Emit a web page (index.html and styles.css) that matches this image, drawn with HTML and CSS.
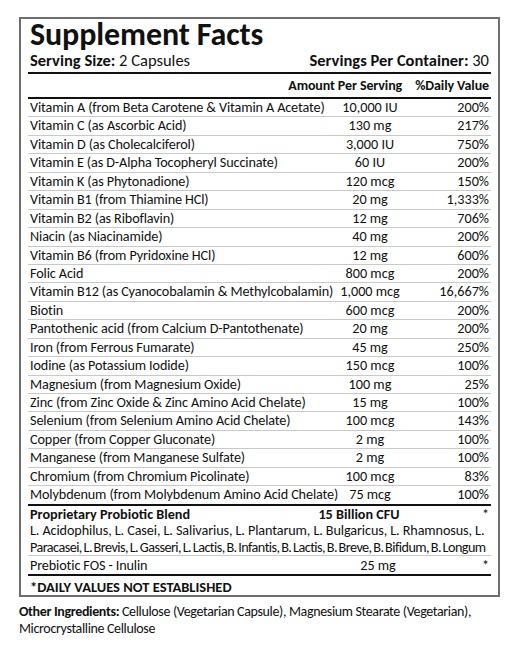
FILE: index.html
```html
<!DOCTYPE html>
<html>
<head>
<meta charset="utf-8">
<link rel="stylesheet" href="styles.css">
</head>
<body>
<div class="label">
  <h1 class="title">Supplement Facts</h1>
  <div class="serving">
    <span><b>Serving Size:</b> 2 Capsules</span>
    <span><b>Servings Per Container:</b> 30</span>
  </div>
  <div class="colhead">
    <span class="h-amt">Amount Per Serving</span>
    <span class="h-dv">%Daily Value</span>
  </div>
  <div class="rows">
    <div class="row"><span class="name">Vitamin A (from Beta Carotene &amp; Vitamin A Acetate)</span><span class="amt">10,000 IU</span><span class="dv">200%</span></div>
    <div class="row"><span class="name">Vitamin C (as Ascorbic Acid)</span><span class="amt">130 mg</span><span class="dv">217%</span></div>
    <div class="row"><span class="name">Vitamin D (as Cholecalciferol)</span><span class="amt">3,000 IU</span><span class="dv">750%</span></div>
    <div class="row"><span class="name">Vitamin E (as D-Alpha Tocopheryl Succinate)</span><span class="amt">60 IU</span><span class="dv">200%</span></div>
    <div class="row"><span class="name">Vitamin K (as Phytonadione)</span><span class="amt">120 mcg</span><span class="dv">150%</span></div>
    <div class="row"><span class="name">Vitamin B1 (from Thiamine HCl)</span><span class="amt">20 mg</span><span class="dv">1,333%</span></div>
    <div class="row"><span class="name">Vitamin B2 (as Riboflavin)</span><span class="amt">12 mg</span><span class="dv">706%</span></div>
    <div class="row"><span class="name">Niacin (as Niacinamide)</span><span class="amt">40 mg</span><span class="dv">200%</span></div>
    <div class="row"><span class="name">Vitamin B6 (from Pyridoxine HCl)</span><span class="amt">12 mg</span><span class="dv">600%</span></div>
    <div class="row"><span class="name">Folic Acid</span><span class="amt">800 mcg</span><span class="dv">200%</span></div>
    <div class="row"><span class="name">Vitamin B12 (as Cyanocobalamin &amp; Methylcobalamin)</span><span class="amt">1,000 mcg</span><span class="dv">16,667%</span></div>
    <div class="row"><span class="name">Biotin</span><span class="amt">600 mcg</span><span class="dv">200%</span></div>
    <div class="row"><span class="name">Pantothenic acid (from Calcium D-Pantothenate)</span><span class="amt">20 mg</span><span class="dv">200%</span></div>
    <div class="row"><span class="name">Iron (from Ferrous Fumarate)</span><span class="amt">45 mg</span><span class="dv">250%</span></div>
    <div class="row"><span class="name">Iodine (as Potassium Iodide)</span><span class="amt">150 mcg</span><span class="dv">100%</span></div>
    <div class="row"><span class="name">Magnesium (from Magnesium Oxide)</span><span class="amt">100 mg</span><span class="dv">25%</span></div>
    <div class="row"><span class="name">Zinc (from Zinc Oxide &amp; Zinc Amino Acid Chelate)</span><span class="amt">15 mg</span><span class="dv">100%</span></div>
    <div class="row"><span class="name">Selenium (from Selenium Amino Acid Chelate)</span><span class="amt">100 mcg</span><span class="dv">143%</span></div>
    <div class="row"><span class="name">Copper (from Copper Gluconate)</span><span class="amt">2 mg</span><span class="dv">100%</span></div>
    <div class="row"><span class="name">Manganese (from Manganese Sulfate)</span><span class="amt">2 mg</span><span class="dv">100%</span></div>
    <div class="row"><span class="name">Chromium (from Chromium Picolinate)</span><span class="amt">100 mcg</span><span class="dv">83%</span></div>
    <div class="row row-last"><span class="name">Molybdenum (from Molybdenum Amino Acid Chelate)</span><span class="amt">75 mcg</span><span class="dv">100%</span></div>
  </div>
  <div class="blend">
    <div class="blend-head"><span class="name"><b>Proprietary Probiotic Blend</b></span><span class="blend-amt"><b>15 Billion CFU</b></span><span class="dv">*</span></div>
    <div class="species">L. Acidophilus, L. Casei, L. Salivarius, L. Plantarum, L. Bulgaricus, L. Rhamnosus, L.</div>
    <div class="species tight">Paracasei, L. Brevis, L. Gasseri, L. Lactis, B. Infantis, B. Lactis, B. Breve, B. Bifidum, B. Longum</div>
  </div>
  <div class="row row-prebiotic"><span class="name">Prebiotic FOS - Inulin</span><span class="amt amt-pre">25 mg</span><span class="dv">*</span></div>
  <div class="footnote">*DAILY VALUES NOT ESTABLISHED</div>
</div>
<p class="other"><b>Other Ingredients:</b> Cellulose (Vegetarian Capsule), Magnesium Stearate (Vegetarian),<br>Microcrystalline Cellulose</p>
</body>
</html>
```

FILE: styles.css
```css
* { box-sizing: border-box; }
html, body { margin: 0; padding: 0; background: #fff; }
body {
  font-family: Carlito, Calibri, Lato, sans-serif;
  color: #111;
  width: 518px;
}
b { font-weight: 700; }

.label {
  margin: 17px 0 0 19px;
  width: 481px;
  border: 2px solid #6e6e6e;
  padding: 0 7px;
}

.title {
  margin: 0;
  padding-left: 2px;
  font-size: 32px;
  line-height: 31px;
  font-weight: 700;
  letter-spacing: -0.1px;
}

.serving {
  display: flex;
  justify-content: space-between;
  height: 24px;
  padding: 1px 2px 0;
  font-size: 16.5px;
  line-height: 18px;
  border-bottom: 2px solid #111;
}

.colhead {
  display: flex;
  justify-content: flex-end;
  gap: 13px;
  height: 25px;
  padding: 0 2px;
  font-size: 14px;
  font-weight: 700;
  line-height: 23px;
  letter-spacing: -0.1px;
  border-bottom: 2px solid #111;
}

.row {
  display: grid;
  grid-template-columns: minmax(0, 1fr) 72px 83px;
  height: 18.45px;
  padding: 0 2px;
  font-size: 14.2px;
  line-height: 17.45px;
  border-bottom: 1px solid #c9c9c9;
  white-space: nowrap;
}
.row .name { letter-spacing: -0.12px; }
.row-last { border-bottom: 2px solid #111; height: 19.45px; }
.amt { text-align: center; }
.dv { text-align: right; }

.blend {
  padding: 0 2px;
  font-size: 14.2px;
  line-height: 16.5px;
  border-bottom: 1px solid #c9c9c9;
  height: 50px;
}
.blend-head {
  display: grid;
  grid-template-columns: minmax(0, 1fr) 140px 60px;
  white-space: nowrap;
}
.blend-amt { text-align: center; }
.species { white-space: nowrap; letter-spacing: -0.1px; }
.species.tight { letter-spacing: -0.55px; word-spacing: -1px; }

.row-prebiotic {
  height: 20px;
  line-height: 19px;
  border-bottom: 2px solid #111;
}
.amt-pre { padding-left: 16px; }

.footnote {
  height: 19px;
  padding: 3px 2px 0;
  font-size: 14.5px;
  line-height: 17px;
  font-weight: 700;
}

.other {
  margin: 6px 0 0 19px;
  font-size: 14px;
  line-height: 17px;
  letter-spacing: -0.35px;
}
```
